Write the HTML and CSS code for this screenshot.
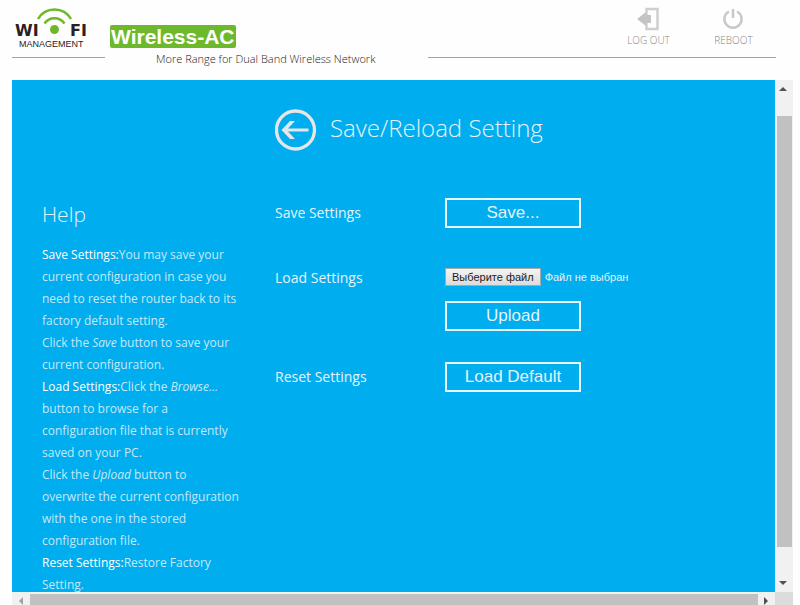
FILE: index.html
```html
<!DOCTYPE html>
<html lang="en">
<head>
<meta charset="utf-8">
<title>Save/Reload Setting</title>
<link rel="stylesheet" href="styles.css">
</head>
<body>
<header class="top">
  <div class="logo">
    <svg width="80" height="46" viewBox="0 0 80 46" role="img" aria-label="WI-FI Management">
      <path d="M26 15A19 19 0 0 1 59 15" class="wave"/>
      <path d="M32.500 19.500A12 12 0 0 1 52.500 19.500" class="wave"/>
      <circle cx="42.500" cy="25.500" r="4.500" class="dot"/>
      <text x="3" y="32" class="logo-big">WI</text>
      <text x="58" y="32" class="logo-big">FI</text>
      <text x="7" y="43" class="logo-small">MANAGEMENT</text>
    </svg>
  </div>
  <div class="product">
    <strong class="product-name">Wireless-AC</strong>
    <p class="tagline">More Range for Dual Band Wireless Network</p>
  </div>
  <nav class="actions">
    <a class="action" href="#">
      <svg width="24" height="24" viewBox="0 0 24 24" aria-hidden="true">
        <path d="M9.500 8V2H20.500V22H9.500V16" fill="none" stroke="#cfcfcf" stroke-width="2.500"/>
        <path d="M0 12L9 5V8H14V16H9V19Z" fill="#c4c4c4"/>
      </svg>
      <span>LOG OUT</span>
    </a>
    <a class="action" href="#">
      <svg width="24" height="24" viewBox="0 0 24 24" aria-hidden="true">
        <path d="M7 4.500A8.600 8.600 0 1 0 15 4.500M11 2V11" fill="none" stroke="#c8c8c8" stroke-width="2.500"/>
      </svg>
      <span>REBOOT</span>
    </a>
  </nav>
</header>
<div class="frame">
  <main class="content">
    <div class="title">
      <a class="back" href="#" aria-label="Back">
        <svg width="42" height="42" viewBox="0 0 42 42" aria-hidden="true">
          <circle cx="20.500" cy="21" r="19" fill="none" stroke="#e6e6e6" stroke-width="3.300"/>
          <path d="M33.500 19.500V22.500H13L20 30H15L6.500 21L15 12H20L13 19.500Z" fill="#e6e6e6"/>
        </svg>
      </a>
      <h1>Save/Reload Setting</h1>
    </div>
    <aside class="help">
      <h2>Help</h2>
      <p><b>Save Settings:</b>You may save your current configuration in case you need to reset the router back to its factory default setting.</p>
      <p>Click the <i>Save</i> button to save your current configuration.</p>
      <p><b>Load Settings:</b>Click the <i>Browse...</i> button to browse for a configuration file that is currently saved on your PC.</p>
      <p>Click the <i>Upload</i> button to overwrite the current configuration with the one in the stored configuration file.</p>
      <p><b>Reset Settings:</b>Restore Factory Setting.</p>
    </aside>
    <form class="settings">
      <div class="row">
        <span class="name">Save Settings</span>
        <button type="button" class="btn">Save...</button>
      </div>
      <div class="row">
        <label for="config" class="name name-load">Load Settings</label>
        <div class="load">
          <div class="file">
            <input type="file" id="config" class="file-input">
            <label for="config" class="file-btn">Выберите файл</label>
            <span>Файл не выбран</span>
          </div>
          <button type="button" class="btn">Upload</button>
        </div>
      </div>
      <div class="row">
        <span class="name">Reset Settings</span>
        <button type="button" class="btn">Load Default</button>
      </div>
    </form>
  </main>
  <div class="bar bar-v" aria-hidden="true">
    <svg class="arrow" width="17" height="17" viewBox="0 0 17 17"><path d="M4 11H12L8 7Z" fill="#505050"/></svg>
    <div class="thumb"></div>
    <svg class="arrow" width="17" height="17" viewBox="0 0 17 17"><path d="M4 6H12L8 10Z" fill="#505050"/></svg>
  </div>
  <div class="bar bar-h" aria-hidden="true">
    <svg class="arrow" width="17" height="17" viewBox="0 0 17 17"><path d="M11 5V13L7 9Z" fill="#a3a3a3"/></svg>
    <div class="thumb"></div>
    <svg class="arrow" width="17" height="17" viewBox="0 0 17 17"><path d="M6 5V13L10 9Z" fill="#505050"/></svg>
  </div>
  <div class="corner"></div>
</div>
</body>
</html>
```
FILE: styles.css
```css
* { box-sizing: border-box; }
body {
  margin: 0;
  padding: 0 7px 0 12px;
  height: 100vh;
  display: flex;
  flex-direction: column;
  overflow: hidden;
  background: #fefefe;
  color: #222;
  font-family: "Open Sans", "Noto Sans", sans-serif;
  font-weight: 300;
}
h1, h2, p { margin: 0; font-weight: 300; }

.top {
  display: grid;
  grid-template-columns: 93px 323px 1fr;
  height: 80px;
  padding-right: 17px;
}
.logo, .actions { height: 58px; border-bottom: 1px solid #a3a3a3; }
.logo { padding-top: 4px; }
.logo svg { display: block; }
.wave { fill: none; stroke: #6eb92b; stroke-width: 2.500; }
.dot { fill: #6eb92b; }
.logo-big { font: bold 16px "DejaVu Sans", sans-serif; fill: #2b2020; }
.logo-small { font: 9px "Liberation Sans", sans-serif; fill: #2b2020; }

.product { padding: 25px 0 0 5px; }
.product-name {
  display: block;
  width: max-content;
  padding: 0 1px;
  border-radius: 2px;
  background: #6eb92b;
  color: #fff;
  font: bold 21px/23px "Liberation Sans", sans-serif;
}
.tagline { padding-left: 46px; font-size: 11px; line-height: 22px; white-space: nowrap; }

.actions { display: flex; justify-content: flex-end; padding-top: 7px; }
.action {
  width: 85px;
  display: flex;
  flex-direction: column;
  align-items: center;
  color: #888;
  font-size: 10px;
  line-height: 18px;
  text-decoration: none;
}

.frame {
  flex: 1;
  min-height: 0;
  display: grid;
  grid-template: minmax(0, 1fr) 13px / minmax(0, 1fr) 18px;
}
.content {
  display: grid;
  grid-template: 89px 1fr / 233px 1fr;
  padding: 29px 0 0 30px;
  overflow: hidden;
  background: #00adef;
  color: #e6f3fa;
}
.title { grid-column: 2; display: flex; align-items: flex-start; gap: 13px; }
.back { height: 42px; }
.title h1 { font-size: 24px; line-height: 38px; }
.help { width: 200px; font-size: 12px; line-height: 22px; color: #c4e9fa; }
.help h2 { margin-bottom: 13px; font-size: 21px; line-height: 33px; color: #e6f3fa; }
.help p { font-weight: 400; }
.help b { font-weight: 400; color: #fff; }

.settings { display: flex; flex-direction: column; gap: 31px; }
.row { display: flex; }
.name { width: 170px; font-size: 14px; font-weight: 400; line-height: 30px; }
.name-load { padding-top: 4px; }
.btn {
  display: block;
  width: 136px;
  height: 30px;
  padding: 0;
  border: 2px solid #e6f8ff;
  background: transparent;
  color: #e6f3fa;
  font: 17px "Liberation Sans", sans-serif;
}
.load { padding-top: 9px; }
.file {
  display: flex;
  align-items: center;
  gap: 4px;
  margin-bottom: 15px;
  font: 11px/18px "Liberation Sans", sans-serif;
}
.file-input { position: absolute; width: 1px; height: 1px; opacity: 0; }
.file-btn {
  padding: 0 6px;
  border: 1px solid #a9a9a9;
  background: linear-gradient(#f4f4f4, #dcdcdc);
  color: #222;
  line-height: 16px;
}

.bar { display: flex; background: #f1f1f1; overflow: hidden; }
.bar-v { flex-direction: column; }
.arrow { flex: none; }
.thumb { background: #c1c1c1; }
.bar-v .thumb { flex: 0 1 431px; margin: 19px 1px auto 2px; }
.bar-h .thumb { flex: 1; margin: 2px 0 0 1px; }
.corner { background: #dcdcdc; }
```
